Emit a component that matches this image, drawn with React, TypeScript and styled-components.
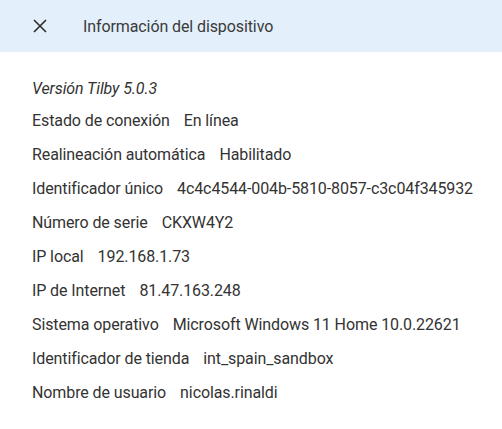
import styled, { createGlobalStyle } from 'styled-components';

const GlobalStyle = createGlobalStyle`
  body {
    margin: 0;
    background: #ffffff;
    font-family: Roboto, 'Liberation Sans', sans-serif;
  }
`;

type TInfoRow = {
  label: string;
  value: string;
};

const rows: TInfoRow[] = [
  { label: 'Estado de conexión', value: 'En línea' },
  { label: 'Realineación automática', value: 'Habilitado' },
  { label: 'Identificador único', value: '4c4c4544-004b-5810-8057-c3c04f345932' },
  { label: 'Número de serie', value: 'CKXW4Y2' },
  { label: 'IP local', value: '192.168.1.73' },
  { label: 'IP de Internet', value: '81.47.163.248' },
  { label: 'Sistema operativo', value: 'Microsoft Windows 11 Home 10.0.22621' },
  { label: 'Identificador de tienda', value: 'int_spain_sandbox' },
  { label: 'Nombre de usuario', value: 'nicolas.rinaldi' },
];

const CloseIcon = () => (
  <svg width='14' height='14' viewBox='0 0 14 14'>
    <path d='M1 1L13 13M13 1L1 13' stroke='#2b2b2b' strokeWidth='1.6' fill='none' />
  </svg>
);

export default function App() {
  return (
    <>
      <GlobalStyle />
      <Dialog>
        <Header>
          <CloseButton aria-label='close'>
            <CloseIcon />
          </CloseButton>
          <Title>Información del dispositivo</Title>
        </Header>
        <Content>
          <Version>Versión Tilby 5.0.3</Version>
          {rows.map((row) => (
            <Row key={row.label}>
              <span>{row.label}</span>
              <span>{row.value}</span>
            </Row>
          ))}
        </Content>
      </Dialog>
    </>
  );
}

const Dialog = styled.div`
  width: 502px;
  height: 429px;
  background: #ffffff;
`;

const Header = styled.div`
  display: flex;
  align-items: center;
  height: 52px;
  padding-left: 33px;
  background: #e3f0fc;
`;

const CloseButton = styled.button`
  display: flex;
  align-items: center;
  justify-content: center;
  padding: 0;
  width: 14px;
  height: 14px;
  border: none;
  background: transparent;
  cursor: pointer;
`;

const Title = styled.h1`
  margin: 0 0 0 36px;
  font-size: 16px;
  font-weight: 400;
  letter-spacing: -0.1px;
  color: #3a3a3a;
`;

const Content = styled.div`
  display: flex;
  flex-direction: column;
  padding: 27px 0 0 32px;
  font-size: 16px;
  letter-spacing: -0.1px;
  color: #333333;
`;

const Version = styled.div`
  height: 32px;
  line-height: 20px;
  font-style: italic;
`;

const Row = styled.div`
  display: flex;
  gap: 14px;
  height: 34px;
  line-height: 20px;
`;
